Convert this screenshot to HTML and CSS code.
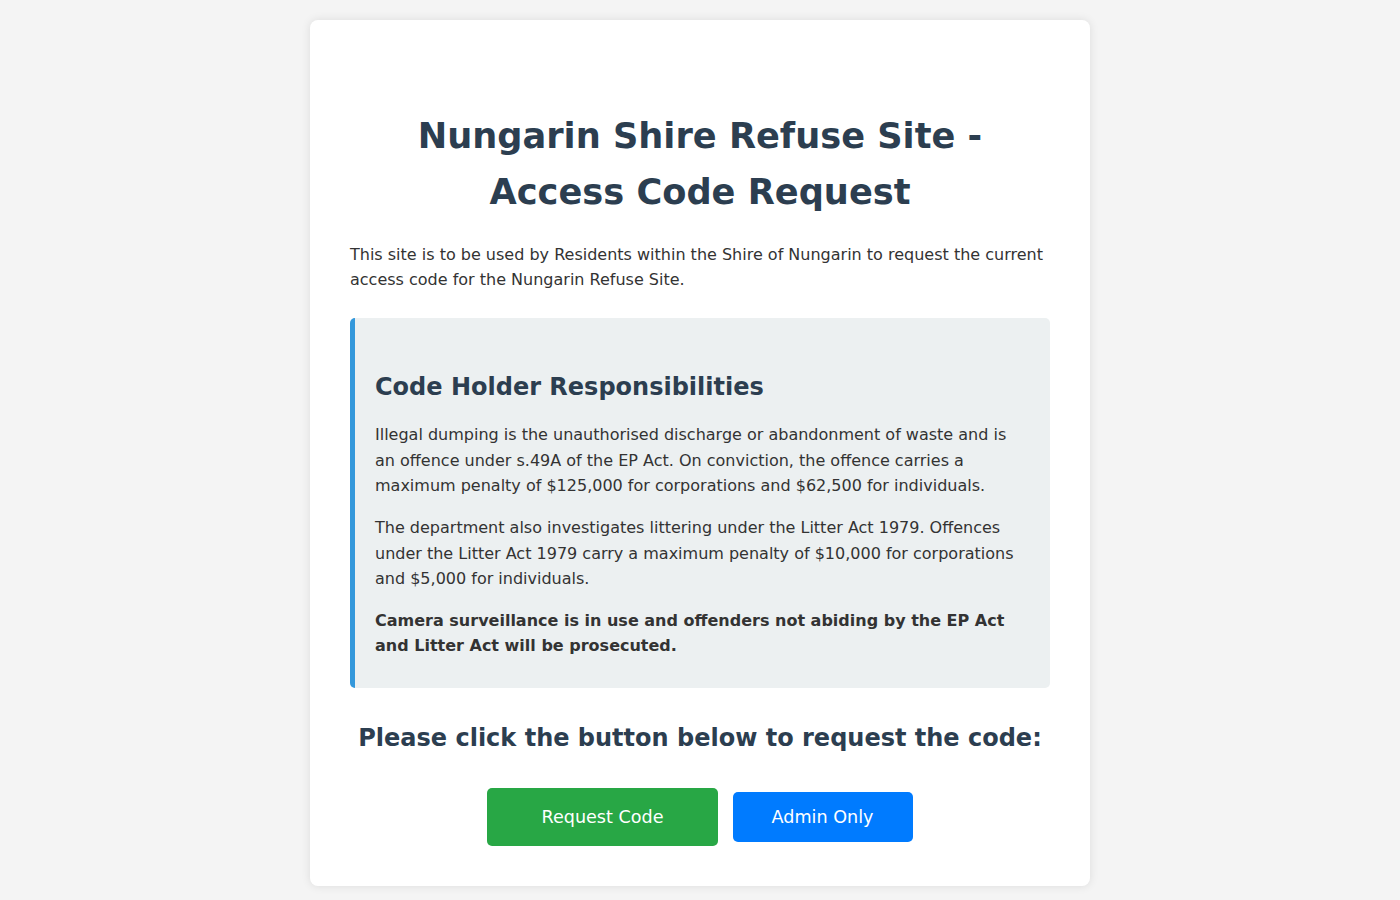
FILE: index.html
```html
<!DOCTYPE html>
<html lang="en">
<head>
    <meta charset="UTF-8">
    <meta name="viewport" content="width=device-width, initial-scale=1.0">
    <title>Nungarin Shire Refuse Site - Access Code Request</title>
    <link rel="stylesheet" href="styles.css">
</head>
<body>
    <div class="container">
        <h1>Nungarin Shire Refuse Site - Access Code Request</h1>
        <p>This site is to be used by Residents within the Shire of Nungarin to request the current access code for the Nungarin Refuse Site.</p>

        <div class="info-box">
            <h2>Code Holder Responsibilities</h2>
            <p>Illegal dumping is the unauthorised discharge or abandonment of waste and is an offence under s.49A of the EP Act. On conviction, the offence carries a maximum penalty of $125,000 for corporations and $62,500 for individuals.</p>
            <p>The department also investigates littering under the Litter Act 1979. Offences under the Litter Act 1979 carry a maximum penalty of $10,000 for corporations and $5,000 for individuals.</p>
            <p><strong>Camera surveillance is in use and offenders not abiding by the EP Act and Litter Act will be prosecuted.</strong></p>
        </div>

        <h3>Please click the button below to request the code:</h3>

        <div class="button-row">
            <button type="button" class="btn btn-request">Request Code</button>
            <button type="button" class="btn btn-admin">Admin Only</button>
        </div>
    </div>
</body>
</html>
```

FILE: styles.css
```css
body {
    font-family: "DejaVu Sans", Verdana, sans-serif;
    background-color: #f4f4f4;
    color: #333;
    line-height: 1.6;
    margin: 0;
    padding: 20px;
}
.container {
    max-width: 700px;
    margin: 0 auto;
    background: #fff;
    padding: 40px;
    border-radius: 8px;
    box-shadow: 0 0 10px rgba(0, 0, 0, 0.1);
}
h1 {
    font-size: 35.2px;
    color: #2c3e50;
    text-align: center;
    margin: 48px 0 21px;
}
p {
    font-size: 16px;
    margin: 0 0 16px;
}
.info-box {
    background-color: #ecf0f1;
    border-left: 5px solid #3498db;
    border-radius: 5px;
    padding: 30px 20px 13px;
    margin: 25px 0 31px;
}
.info-box h2 {
    font-size: 24px;
    color: #2c3e50;
    margin: 20px 0 16px;
}
h3 {
    font-size: 24px;
    color: #2c3e50;
    text-align: center;
    margin: 0 0 31px;
}
.button-row {
    display: flex;
    justify-content: center;
    align-items: center;
    gap: 15px;
}
.btn {
    font-family: inherit;
    font-size: 17.6px;
    line-height: 22px;
    color: #fff;
    border: none;
    border-radius: 5px;
    cursor: pointer;
}
.btn-request {
    background-color: #28a745;
    padding: 18px 54px;
}
.btn-admin {
    background-color: #007bff;
    padding: 14px 39px;
}
.btn-request:hover {
    background-color: #218838;
}
.btn-admin:hover {
    background-color: #0069d9;
}
```
